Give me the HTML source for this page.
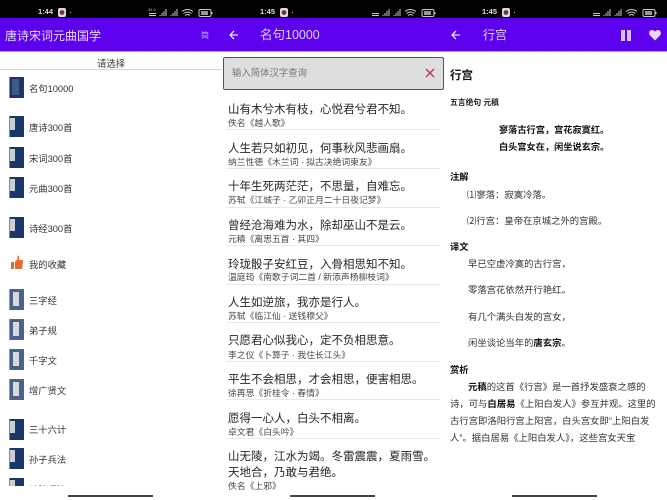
<!DOCTYPE html>
<html lang="zh"><head><meta charset="utf-8"><title>唐诗宋词元曲国学</title>
<style>
html,body{margin:0;padding:0;background:#fff}
#r{position:relative;width:667px;height:500px;overflow:hidden;background:#fff;font-family:"Liberation Sans","Noto Sans CJK SC",sans-serif;color:#2a2a2a;filter:blur(.3px)}
#r div,#r svg{position:absolute}
.t{white-space:nowrap;line-height:14px;height:14px}
.bar{top:0;height:18px;background:#000}
.hd{top:18px;height:33px;background:#5c00ee;border-bottom:1px solid #b99af5}
.time{top:5px;font-size:7.5px;font-weight:bold;color:#ddd}
.l{left:29px;font-size:9.3px;color:#333;margin-top:1px}
.b{left:9px;width:15px;height:21px;background:#1b3768;border-left:1px solid #7c8ba8;box-sizing:border-box}
.b i{position:absolute;left:0;top:2px;width:5px;height:12px;background:#c9ced6;display:block}
.c{left:9px;width:15px;height:21px;background:#4c628c;box-sizing:border-box;border-left:1px solid #8b99b4}
.c i{position:absolute;left:3px;top:3px;width:6px;height:14px;background:#d7d8dc;display:block}
.q{left:228px;font-size:11.5px;color:#262626;margin-top:1px}
.s{left:228px;font-size:8.8px;color:#484848}
.d{left:226px;width:214px;height:1px;background:#e9e9e9}
.h{left:450px;font-size:9.3px;font-weight:bold;color:#111;margin-top:1px}
.p{font-size:9.36px;color:#333;margin-top:1px}
.home{top:495px;height:2px;width:85px;background:#444}
.net{top:8px;font-size:4px;line-height:4px;color:#bbb}
b{color:#111}
</style></head><body><div id="r">

<div class="bar" style="left:0;width:667px"></div>
<div class="hd" style="left:0;width:667px"></div>

<div class="t time" style="left:38px">1:44</div>
<svg style="left:58px;top:8px" width="8" height="9"><rect width="8" height="9" rx="2" fill="#ddd"/><circle cx="4" cy="4.5" r="2.4" fill="#6b3a32"/></svg>
<div style="left:70px;top:12px;width:1px;height:1px;background:#bbb"></div>
<div class="t net" style="left:148px">34.0</div>
<svg style="left:148px;top:8px" width="66" height="10" fill="none" stroke="#c8c8c8">
<path d="M1 5.5h7M1 7.5h7" stroke-width="1"/>
<path d="M12 8v-1M14 8v-3M16 8v-5M18 8v-7M23 8v-1M25 8v-3M27 8v-5M29 8v-7"/>
<path d="M34 3.5q5.500-4 11 0M35.500 5.500q4-3 8 0M37 7.500q2.500-2 5 0" stroke-width="1"/>
<rect x="51" y="1.500" width="12" height="7" rx="1.500"/><rect x="53" y="3" width="7" height="4" fill="#999" stroke="none"/><path d="M64 4v2"/>
</svg>
<div class="t" style="left:5px;top:29px;font-size:12px;color:#e8dcff">唐诗宋词元曲国学</div>
<div class="t" style="left:201px;top:29px;font-size:8px;color:#cdb8fb">简</div>
<div class="t" style="left:97px;top:57px;font-size:9.4px;color:#333">请选择</div>
<div style="left:0;top:69px;width:222px;height:1px;background:#d6d6d6"></div>

<div style="left:0;top:70px;width:222px;height:416px;overflow:hidden">
<div class="b" style="top:7px"><i style="background:#3f5a86;height:16px;width:7px;left:2px"></i></div>
<div class="t l" style="top:11px">名句10000</div>
<div class="b" style="top:46px"><i></i></div><div class="t l" style="top:50px">唐诗300首</div>
<div class="b" style="top:77px"><i></i></div><div class="t l" style="top:81px">宋词300首</div>
<div class="b" style="top:107px"><i></i></div><div class="t l" style="top:111px">元曲300首</div>
<div class="b" style="top:147px"><i></i></div><div class="t l" style="top:151px">诗经300首</div>
<svg style="left:11px;top:185px" width="12" height="15"><path d="M0 7h3v7H0zM4 7l2.500-3L6.500 0.500 8 1 8 5h3.500l.5 1-1 8H4z" fill="#e8682f"/></svg>
<div class="t l" style="top:187px">我的收藏</div>
<div class="c" style="top:219px"><i></i></div><div class="t l" style="top:223px">三字经</div>
<div class="c" style="top:249px"><i></i></div><div class="t l" style="top:253px">弟子规</div>
<div class="c" style="top:279px"><i></i></div><div class="t l" style="top:283px">千字文</div>
<div class="c" style="top:309px"><i></i></div><div class="t l" style="top:313px">增广贤文</div>
<div class="b" style="top:349px"><i></i></div><div class="t l" style="top:352px">三十六计</div>
<div class="b" style="top:378px"><i></i></div><div class="t l" style="top:382px">孙子兵法</div>
<div class="b" style="top:408px"><i></i></div><div class="t l" style="top:412px">孙膑兵法</div>
</div>
<div class="home" style="left:68px"></div>

<div class="t time" style="left:260px">1:45</div>
<svg style="left:280px;top:8px" width="8" height="9"><rect width="8" height="9" rx="2" fill="#ddd"/><circle cx="4" cy="4.5" r="2.4" fill="#6b3a32"/></svg>
<div style="left:292px;top:12px;width:1px;height:1px;background:#bbb"></div>
<svg style="left:371px;top:8px" width="66" height="10" fill="none" stroke="#c8c8c8">
<path d="M1 5.500h7M1 7.500h7" stroke-width="1"/>
<path d="M12 8v-1M14 8v-3M16 8v-5M18 8v-7M23 8v-1M25 8v-3M27 8v-5M29 8v-7"/>
<path d="M34 3.500q5.500-4 11 0M35.500 5.500q4-3 8 0M37 7.500q2.500-2 5 0"/>
<rect x="51" y="1.500" width="12" height="7" rx="1.500"/><rect x="53" y="3" width="7" height="4" fill="#999" stroke="none"/><path d="M64 4v2"/>
</svg>
<svg style="left:228px;top:29px" width="12" height="12" fill="none" stroke="#ece2ff" stroke-width="1.300"><path d="M10 6H2M6 2L2 6l4 4"/></svg>
<div class="t" style="left:260px;top:28px;font-size:12.500px;color:#e0d0ff">名句10000</div>
<div style="left:223px;top:57px;width:219px;height:31px;background:#dedede;border:1px solid #6a30cc;border-radius:2px"></div>
<div class="t" style="left:232px;top:66px;font-size:9.400px;color:#777">输入简体汉字查询</div>
<svg style="left:425px;top:68px" width="10" height="10" fill="none" stroke="#c2314a" stroke-width="1.300"><path d="M1 1l8 8M9 1L1 9"/></svg>

<div class="t q" style="top:102px">山有木兮木有枝，心悦君兮君不知。</div>
<div class="t s" style="top:116px">佚名《越人歌》</div><div class="d" style="top:129px"></div>
<div class="t q" style="top:141px">人生若只如初见，何事秋风悲画扇。</div>
<div class="t s" style="top:155px">纳兰性德《木兰词 · 拟古决绝词柬友》</div><div class="d" style="top:168px"></div>
<div class="t q" style="top:179px">十年生死两茫茫，不思量，自难忘。</div>
<div class="t s" style="top:193px">苏轼《江城子 · 乙卯正月二十日夜记梦》</div><div class="d" style="top:207px"></div>
<div class="t q" style="top:218px">曾经沧海难为水，除却巫山不是云。</div>
<div class="t s" style="top:232px">元稹《离思五首 · 其四》</div><div class="d" style="top:245px"></div>
<div class="t q" style="top:257px">玲珑骰子安红豆，入骨相思知不知。</div>
<div class="t s" style="top:270px">温庭筠《南歌子词二首 / 新添声杨柳枝词》</div><div class="d" style="top:284px"></div>
<div class="t q" style="top:295px">人生如逆旅，我亦是行人。</div>
<div class="t s" style="top:309px">苏轼《临江仙 · 送钱穆父》</div><div class="d" style="top:322px"></div>
<div class="t q" style="top:333px">只愿君心似我心，定不负相思意。</div>
<div class="t s" style="top:348px">李之仪《卜算子 · 我住长江头》</div><div class="d" style="top:361px"></div>
<div class="t q" style="top:372px">平生不会相思，才会相思，便害相思。</div>
<div class="t s" style="top:386px">徐再思《折桂令 · 春情》</div><div class="d" style="top:399px"></div>
<div class="t q" style="top:411px">愿得一心人，白头不相离。</div>
<div class="t s" style="top:425px">卓文君《白头吟》</div><div class="d" style="top:438px"></div>
<div class="t q" style="top:449px">山无陵，江水为竭。冬雷震震，夏雨雪。</div>
<div class="t q" style="top:465px">天地合，乃敢与君绝。</div>
<div class="t s" style="top:479px">佚名《上邪》</div>
<div class="home" style="left:290px"></div>

<div class="t time" style="left:482px">1:45</div>
<svg style="left:502px;top:8px" width="8" height="9"><rect width="8" height="9" rx="2" fill="#ddd"/><circle cx="4" cy="4.5" r="2.4" fill="#6b3a32"/></svg>
<div style="left:514px;top:12px;width:1px;height:1px;background:#bbb"></div>
<svg style="left:592px;top:8px" width="66" height="10" fill="none" stroke="#c8c8c8">
<path d="M1 5.500h7M1 7.500h7" stroke-width="1"/>
<path d="M12 8v-1M14 8v-3M16 8v-5M18 8v-7M23 8v-1M25 8v-3M27 8v-5M29 8v-7"/>
<path d="M34 3.500q5.500-4 11 0M35.500 5.500q4-3 8 0M37 7.500q2.500-2 5 0"/>
<rect x="51" y="1.500" width="12" height="7" rx="1.500"/><rect x="53" y="3" width="7" height="4" fill="#999" stroke="none"/><path d="M64 4v2"/>
</svg>
<svg style="left:450px;top:29px" width="12" height="12" fill="none" stroke="#ece2ff" stroke-width="1.300"><path d="M10 6H2M6 2L2 6l4 4"/></svg>
<div class="t" style="left:483px;top:28px;font-size:12px;color:#e0d0ff">行宫</div>
<div style="left:621px;top:30px;width:4px;height:11px;background:#d6c2fb"></div>
<div style="left:627px;top:30px;width:4px;height:11px;background:#d6c2fb"></div>
<svg style="left:649px;top:29px" width="12" height="12"><path d="M6 11.500L1 6.500C-.800 4.500.300 1 3 1c1.300 0 2.400.700 3 1.800C6.600 1.700 7.700 1 9 1c2.700 0 3.800 3.500 2 5.500z" fill="#e6d9fd"/></svg>

<div class="t" style="left:450px;top:69px;font-size:11.500px;font-weight:bold;color:#111">行宫</div>
<div class="t" style="left:450px;top:96px;font-size:7.800px;font-weight:bold;color:#222">五言绝句 元稹</div>
<div class="t" style="left:499px;top:123px;font-size:9.200px;font-weight:bold;color:#111">寥落古行宫，宫花寂寞红。</div>
<div class="t" style="left:499px;top:140px;font-size:9.200px;font-weight:bold;color:#111">白头宫女在，闲坐说玄宗。</div>
<div class="t h" style="top:169px">注解</div>
<div class="t p" style="left:467px;top:187px">⑴寥落：寂寞冷落。</div>
<div class="t p" style="left:467px;top:213px">⑵行宫：皇帝在京城之外的宫殿。</div>
<div class="t h" style="top:239px">译文</div>
<div class="t p" style="left:468px;top:256px">早已空虚冷寞的古行宫，</div>
<div class="t p" style="left:468px;top:282px">零落宫花依然开行艳红。</div>
<div class="t p" style="left:468px;top:309px">有几个满头白发的宫女，</div>
<div class="t p" style="left:468px;top:335px">闲坐谈论当年的<b>唐玄宗</b>。</div>
<div class="t h" style="top:362px">赏析</div>
<div class="t p" style="left:468px;top:379px"><b>元稹</b>的这首《行宫》是一首抒发盛衰之感的</div>
<div class="t p" style="left:450px;top:396px">诗，可与<b>白居易</b>《上阳白发人》参互并观。这里的</div>
<div class="t p" style="left:450px;top:413px">古行宫即洛阳行宫上阳宫，白头宫女即“上阳白发</div>
<div class="t p" style="left:450px;top:430px">人”。据白居易《上阳白发人》，这些宫女天宝</div>
<div class="home" style="left:512px"></div>

</div></body></html>
